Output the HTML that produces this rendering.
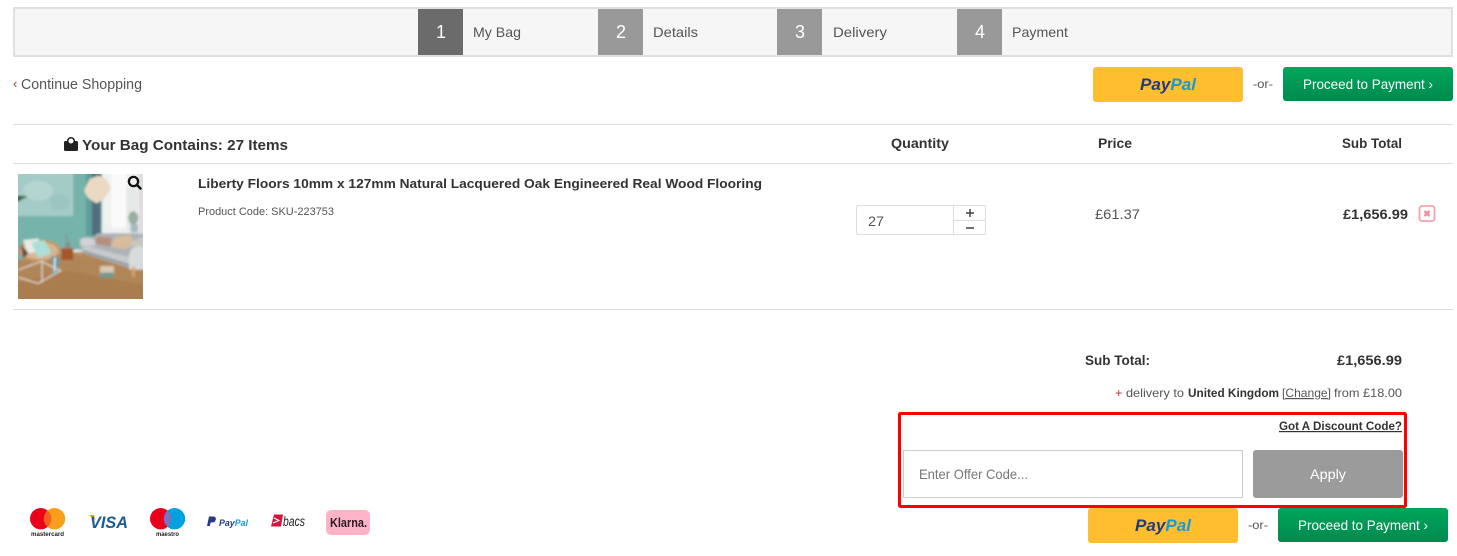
<!DOCTYPE html>
<html lang="en">
<head>
<meta charset="utf-8">
<title>Your Bag</title>
<style>
html,body{margin:0;padding:0;background:#fff;width:1457px;height:556px;overflow:hidden}
svg{display:block;position:absolute;left:0;top:0}
text{font-family:"Liberation Sans",sans-serif;white-space:pre}
.r{font-size:14px;fill:#555}
.b{font-weight:bold;fill:#333}
</style>
</head>
<body>
<svg width="1457" height="556" viewBox="0 0 1457 556" xmlns="http://www.w3.org/2000/svg">
<defs>
<linearGradient id="g" x1="0" y1="0" x2="0" y2="1"><stop offset="0" stop-color="#00a65c"/><stop offset="1" stop-color="#008a4c"/></linearGradient>
<filter id="bl" filterUnits="userSpaceOnUse" x="-30" y="-30" width="435" height="435"><feGaussianBlur stdDeviation="3.2"/></filter>
<filter id="bs"><feGaussianBlur stdDeviation="0.3"/></filter>
<clipPath id="ph"><rect width="375" height="375"/></clipPath>
</defs>

<!-- steps -->
<rect x="14" y="8" width="1438" height="48" fill="#f6f6f6" stroke="#e3dfdf" stroke-width="2"/>
<rect x="418" y="9" width="45" height="46" fill="#6b6b6b"/>
<rect x="598" y="9" width="45" height="46" fill="#999"/>
<rect x="777" y="9" width="45" height="46" fill="#999"/>
<rect x="957" y="9" width="45" height="46" fill="#999"/>
<g font-size="18" fill="#fff" text-anchor="middle">
<text x="441" y="38">1</text><text x="621" y="38">2</text><text x="800" y="38">3</text><text x="980" y="38">4</text>
</g>
<text class="r" x="473" y="37" textLength="48" lengthAdjust="spacingAndGlyphs">My Bag</text>
<text class="r" x="653" y="37" textLength="45" lengthAdjust="spacingAndGlyphs">Details</text>
<text class="r" x="833" y="37" textLength="54" lengthAdjust="spacingAndGlyphs">Delivery</text>
<text class="r" x="1012" y="37" textLength="56" lengthAdjust="spacingAndGlyphs">Payment</text>

<!-- top row -->
<text x="13" y="88" font-size="13" fill="#b3352f">‹</text>
<text x="21" y="89" font-size="14.5" fill="#555" textLength="121" lengthAdjust="spacingAndGlyphs">Continue Shopping</text>
<rect x="1093" y="67" width="150" height="35" rx="3" fill="#ffbe2e"/>
<text x="1140" y="90" font-size="17" font-weight="bold" font-style="italic" fill="#253b80" textLength="56" lengthAdjust="spacingAndGlyphs">Pay<tspan fill="#179bd7">Pal</tspan></text>
<text x="1253" y="88" font-size="12" fill="#555" textLength="20" lengthAdjust="spacingAndGlyphs">-or-</text>
<rect x="1283" y="67" width="170" height="34" rx="3" fill="url(#g)"/>
<text x="1303" y="89" font-size="14" fill="#fff" textLength="130" lengthAdjust="spacingAndGlyphs">Proceed to Payment ›</text>

<!-- table head -->
<rect x="13" y="124" width="1440" height="1" fill="#ddd"/>
<rect x="13" y="163" width="1440" height="1" fill="#ddd"/>
<path d="M65.500 141h11a1.500 1.500 0 0 1 1.500 1.500v7a1.500 1.500 0 0 1-1.500 1.500h-11a1.500 1.500 0 0 1-1.500-1.500v-7a1.500 1.500 0 0 1 1.500-1.500z" fill="#222"/>
<circle cx="71" cy="141" r="3.300" fill="#fff" stroke="#222" stroke-width="1.500"/>
<text x="82" y="150" font-size="15" class="b" textLength="206" lengthAdjust="spacingAndGlyphs">Your Bag Contains: 27 Items</text>
<text x="891" y="148" font-size="13.500" class="b" textLength="58" lengthAdjust="spacingAndGlyphs">Quantity</text>
<text x="1098" y="148" font-size="13.500" class="b" textLength="34" lengthAdjust="spacingAndGlyphs">Price</text>
<text x="1342" y="148" font-size="13.500" class="b" textLength="60" lengthAdjust="spacingAndGlyphs">Sub Total</text>

<!-- product image -->
<svg x="18" y="174" width="125" height="125" viewBox="0 0 375 375">
<g clip-path="url(#ph)">
<g filter="url(#bl)">
<rect x="-30" y="-30" width="435" height="435" fill="#74b3ab"/>
<rect x="-30" y="-30" width="196" height="156" fill="#a5cbc7"/>
<ellipse cx="60" cy="50" rx="45" ry="30" fill="#b5d5d1"/>
<ellipse cx="125" cy="85" rx="30" ry="25" fill="#9cc5c1"/>
<rect x="204" y="-30" width="18" height="215" fill="#5f9f9a"/>
<rect x="222" y="-30" width="26" height="215" fill="#50697a" opacity=".95"/>
<rect x="252" y="-30" width="170" height="208" fill="#eff1f0"/>
<rect x="280" y="-30" width="44" height="190" fill="#fafafa"/>
<rect x="326" y="40" width="32" height="130" fill="#e4e8e6"/>
<ellipse cx="346" cy="132" rx="15" ry="20" fill="#98ae9f"/>
<rect x="338" y="150" width="22" height="25" fill="#a4bbc0"/>
<rect x="362" y="-30" width="60" height="210" fill="#dedede"/>
<!-- floor -->
<path d="M-30 262L165 235 250 235 420 290V405H-30z" fill="#b08658"/>
<path d="M-30 330L150 290 420 340V405H-30z" fill="#aa7d50"/>
<rect x="165" y="227" width="30" height="8" fill="#e8e6e2"/>
<!-- sofa -->
<path d="M185 200q2-10 14-10h30l6-10q2-2 6-2h110q25 0 40 14v95h-40l-145-45q-20-8-21-42z" fill="#adb3b7"/>
<path d="M187 195q18-6 40 0l6 20-46 0z" fill="#d0d4d7"/>
<path d="M195 212l140 38v20l-140-42z" fill="#c6cacd"/>
<path d="M195 228l140 42v8l-130-38z" fill="#9aa0a5"/>
<path d="M332 250q4-30 24-33h40v70h-62z" fill="#d8dbdd"/>
<path d="M235 187l45 4-3 27-43-8z" fill="#b68f7c"/>
<path d="M290 190l48-7 10 28-30 15-40-8z" fill="#dabb9a"/>
<path d="M335 205l45-20v30l-34 5z" fill="#c9c6bf"/>
<rect x="342" y="278" width="9" height="30" fill="#d9a26c"/>
<rect x="185" y="232" width="6" height="14" fill="#c99a68"/>
<!-- table -->
<rect x="130" y="222" width="36" height="36" rx="3" fill="#a6562b"/>
<circle cx="150" cy="213" r="8" fill="#8d8a88"/>
<path d="M142 182q5 15 8 28" stroke="#7c8a80" stroke-width="3" fill="none"/>
<!-- chair -->
<ellipse cx="65" cy="230" rx="60" ry="30" fill="#d5b693"/>
<ellipse cx="65" cy="230" rx="60" ry="30" fill="none" stroke="#c4925f" stroke-width="7"/>
<path d="M15 198l45-4 25 35-55 10z" fill="#e7ebe6"/>
<path d="M40 205l40-7 20 40-40 14z" fill="#acdfd6"/>
<path d="M8 212l24 26-16 14z" fill="#5f4c44"/>
<path d="M100 245l24 8-5 46-15 7z" fill="#5a93a8"/>
<path d="M108 250l6 2-2 40-5 3z" fill="#e8ebe6"/>
<path d="M0 288L70 262 128 290 60 328 0 310M72 260V326" fill="none" stroke="#e2ddd2" stroke-width="3.500"/>
<!-- basket -->
<rect x="246" y="276" width="42" height="22" rx="4" fill="#d8c7b0"/>
<rect x="246" y="296" width="42" height="15" rx="3" fill="#6f9a92"/>
<!-- lamp -->
<path d="M198 50L215 15 240 5 265 15 278 45 255 78 235 88 210 72z" fill="#ead9c3"/>
<rect x="236" y="-30" width="3" height="35" fill="#888"/>
<path d="M-20 68q30-6 50 0-18 6-50 30z" fill="#3d6b4b"/>
</g></g>
</svg>
<circle cx="133.500" cy="181.500" r="4.600" fill="none" stroke="#111" stroke-width="2.300"/>
<path d="M137 185l3.500 3.500" stroke="#111" stroke-width="2.600" stroke-linecap="round"/>

<!-- product row -->
<text x="198" y="188" font-size="13" class="b" textLength="564" lengthAdjust="spacingAndGlyphs">Liberty Floors 10mm x 127mm Natural Lacquered Oak Engineered Real Wood Flooring</text>
<text x="198" y="215" font-size="11" fill="#555" textLength="136" lengthAdjust="spacingAndGlyphs">Product Code: SKU-223753</text>

<rect x="856.500" y="205.500" width="129" height="29" rx="1.500" fill="#fff" stroke="#e0dcdc"/>
<path d="M953.500 205.500v29M953.500 220.500h32" stroke="#e0dcdc" fill="none"/>
<text x="868" y="226" font-size="14" fill="#555" textLength="16" lengthAdjust="spacingAndGlyphs">27</text>
<path d="M966 213h8M970 209v8M966 228h8" stroke="#444" stroke-width="1.500" fill="none"/>
<text x="1095" y="219" font-size="14" fill="#555" textLength="45" lengthAdjust="spacingAndGlyphs">£61.37</text>
<text x="1343" y="219" font-size="14" class="b" textLength="65" lengthAdjust="spacingAndGlyphs">£1,656.99</text>
<rect x="1419.500" y="206" width="15" height="15" rx="2.500" fill="#fff" stroke="#f2a3ad" stroke-width="1.800"/>
<path d="M1424.500 211l5 5M1429.500 211l-5 5" stroke="#ef8f9b" stroke-width="2.400" fill="none"/>

<rect x="13" y="309" width="1440" height="1" fill="#ddd"/>

<!-- totals -->
<text x="1085" y="365" font-size="13.500" class="b" textLength="65" lengthAdjust="spacingAndGlyphs">Sub Total:</text>
<text x="1337" y="365" font-size="14" class="b" textLength="65" lengthAdjust="spacingAndGlyphs">£1,656.99</text>
<text x="1115" y="397" font-size="12" fill="#555" textLength="69" lengthAdjust="spacingAndGlyphs"><tspan fill="#b3352f">+</tspan> delivery to</text>
<text x="1188" y="397" font-size="12" class="b" textLength="91" lengthAdjust="spacingAndGlyphs">United Kingdom</text>
<text x="1282" y="397" font-size="12" fill="#555" textLength="49" lengthAdjust="spacingAndGlyphs" text-decoration="underline">[Change]</text>
<text x="1334" y="397" font-size="12" fill="#555" textLength="68" lengthAdjust="spacingAndGlyphs">from £18.00</text>

<!-- discount -->
<rect x="899.500" y="413.500" width="506" height="93" rx="1" fill="#fff" stroke="#f00" stroke-width="3"/>
<text x="1279" y="430" font-size="12" class="b" textLength="123" lengthAdjust="spacingAndGlyphs" text-decoration="underline">Got A Discount Code?</text>
<rect x="903.500" y="450.500" width="339" height="47" fill="#fff" stroke="#ccc"/>
<text x="919" y="479" font-size="14" fill="#777" textLength="109" lengthAdjust="spacingAndGlyphs">Enter Offer Code...</text>
<rect x="1253" y="450" width="150" height="48" rx="3" fill="#9b9b9b"/>
<text x="1310" y="479" font-size="14" fill="#fff" textLength="36" lengthAdjust="spacingAndGlyphs">Apply</text>

<!-- bottom buttons -->
<rect x="1088" y="508" width="150" height="35" rx="3" fill="#ffbe2e"/>
<text x="1135" y="531" font-size="17" font-weight="bold" font-style="italic" fill="#253b80" textLength="56" lengthAdjust="spacingAndGlyphs">Pay<tspan fill="#179bd7">Pal</tspan></text>
<text x="1248" y="529" font-size="12" fill="#555" textLength="20" lengthAdjust="spacingAndGlyphs">-or-</text>
<rect x="1278" y="508" width="170" height="34" rx="3" fill="url(#g)"/>
<text x="1298" y="530" font-size="14" fill="#fff" textLength="130" lengthAdjust="spacingAndGlyphs">Proceed to Payment ›</text>

<!-- payment logos -->
<g filter="url(#bs)">
<circle cx="40.700" cy="518.700" r="10.700" fill="#eb001b"/>
<circle cx="54.500" cy="518.700" r="10.700" fill="#f79e1b"/>
<path d="M47.600 510.500a10.700 10.700 0 0 1 0 16.400a10.700 10.700 0 0 1 0-16.400z" fill="#f4601a"/>
<text x="31" y="536" font-size="6" font-weight="bold" fill="#222" textLength="33" lengthAdjust="spacingAndGlyphs">mastercard</text>

<path d="M88 515l6 0 2 6q-3-4-8-6z" fill="#f7a823"/>
<text x="90" y="528" font-size="17" font-weight="bold" font-style="italic" fill="#1a5a96" textLength="38" lengthAdjust="spacingAndGlyphs">VISA</text>

<circle cx="160.700" cy="518.700" r="10.700" fill="#eb001b"/>
<circle cx="174.500" cy="518.700" r="10.700" fill="#00a1df"/>
<path d="M167.600 510.500a10.700 10.700 0 0 1 0 16.400a10.700 10.700 0 0 1 0-16.400z" fill="#7673c0"/>
<text x="156" y="536" font-size="6" font-weight="bold" fill="#222" textLength="23" lengthAdjust="spacingAndGlyphs">maestro</text>

<path d="M209 516.500h4.500q2.800.3 2.300 3-.6 3-3.900 3h-1.300l-.7 3.500h-2.900z" fill="#253b80"/>
<text x="219" y="526" font-size="9" font-weight="bold" font-style="italic" fill="#253b80" textLength="29" lengthAdjust="spacingAndGlyphs">Pay<tspan fill="#179bd7">Pal</tspan></text>

<path d="M274 514.500h9l-2 12h-10z" fill="#d4163c"/>
<path d="M274 518l5 2.500-6 2.500" fill="none" stroke="#fff" stroke-width="1.100"/>
<text x="283" y="526" font-size="13.500" font-style="italic" fill="#222" textLength="22" lengthAdjust="spacingAndGlyphs">bacs</text>

<rect x="326" y="510" width="44" height="25" rx="5" fill="#ffb3c7"/>
<text x="330" y="527" font-size="12.500" font-weight="bold" fill="#2a1a20" textLength="37" lengthAdjust="spacingAndGlyphs">Klarna.</text>
</g>
</svg>
</body>
</html>
